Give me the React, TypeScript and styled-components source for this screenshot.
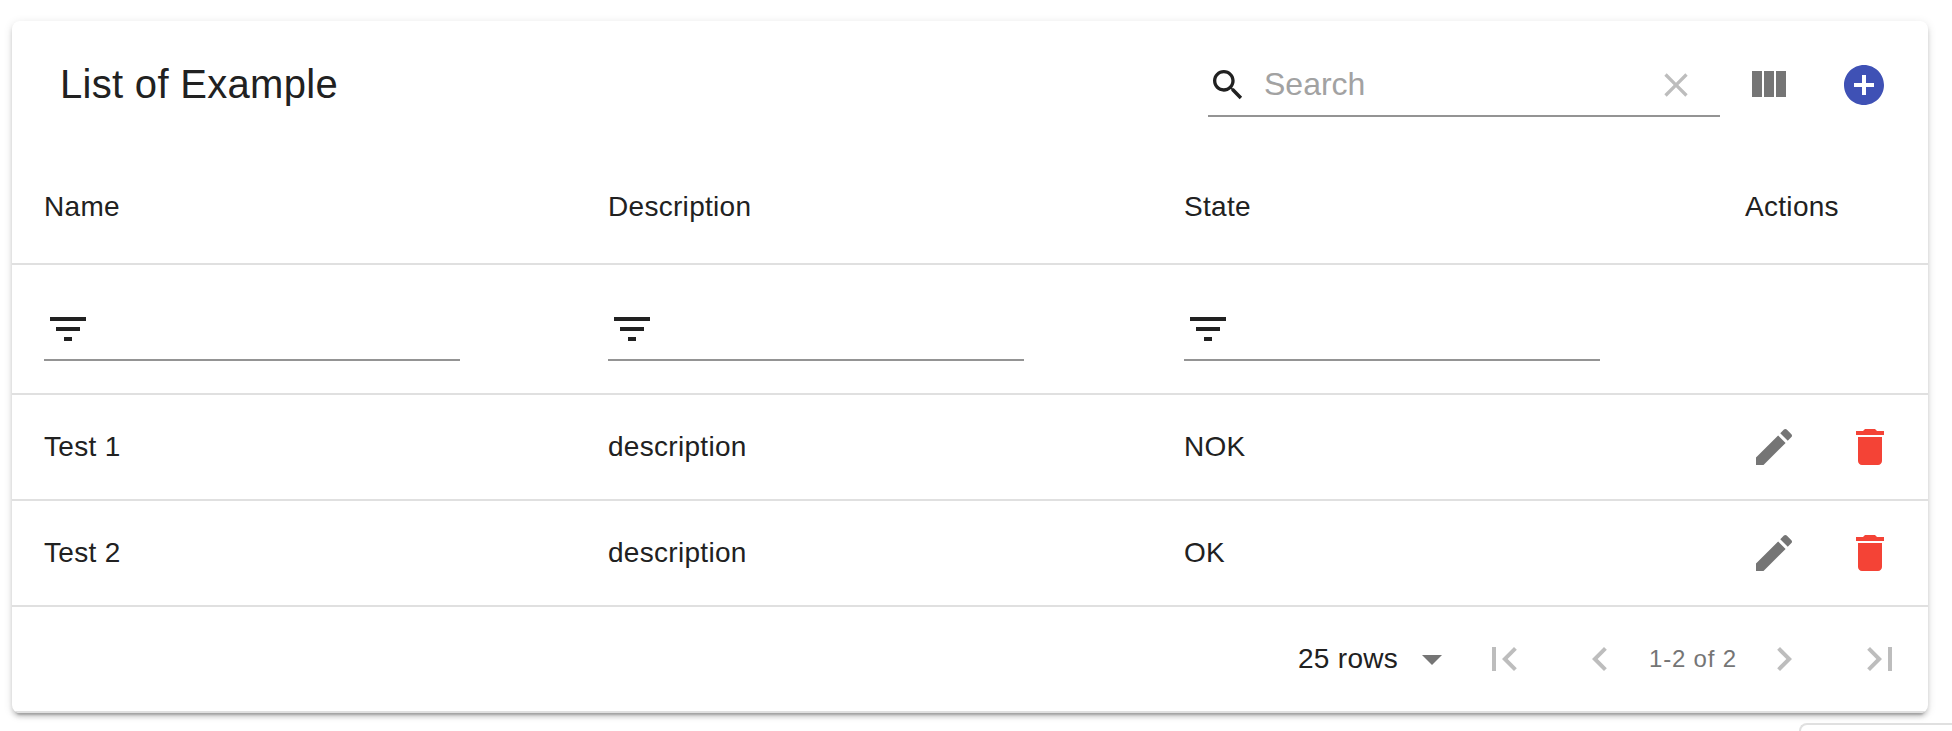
import React from 'react';
import styled, { createGlobalStyle } from 'styled-components';

const GlobalStyle = createGlobalStyle`
  *, *::before, *::after { box-sizing: border-box; }
  body {
    margin: 0;
    background: #fff;
    color: #212121;
    font-family: "Liberation Sans", Arial, Helvetica, sans-serif;
  }
`;

const Page = styled.main`
  display: flex;
  flex-direction: column;
  height: 731px;
  padding: 21px 0 0 12px;
  overflow: hidden;
`;

const Card = styled.section`
  flex: none;
  width: 1916px;
  background: #fff;
  border-radius: 8px;
  box-shadow:
    0 6px 2px -4px rgba(0, 0, 0, 0.2),
    0 4px 4px 0 rgba(0, 0, 0, 0.14),
    0 2px 10px 0 rgba(0, 0, 0, 0.12);
  overflow: hidden;
`;

const Toolbar = styled.header`
  display: flex;
  align-items: center;
  height: 128px;
  padding: 0 16px 0 48px;
`;

const Title = styled.h6`
  flex: 1;
  margin: 0;
  padding-bottom: 2px;
  font-size: 40px;
  font-weight: 400;
  line-height: 64px;
  letter-spacing: 0.3px;
`;

const SearchField = styled.label`
  display: flex;
  align-items: center;
  width: 512px;
  height: 64px;
  padding-top: 2px;
  border-bottom: 2px solid #949494;
`;

const SearchInput = styled.input`
  flex: 1;
  min-width: 0;
  height: 38px;
  margin: 0 0 2px 16px;
  padding: 0;
  border: 0;
  outline: 0;
  background: none;
  color: #212121;
  font: 32px "Liberation Sans", Arial, sans-serif;

  &::placeholder {
    color: #a2a2a2;
    opacity: 1;
  }
`;

const IconButton = styled.button<{ $color?: string }>`
  display: flex;
  flex: none;
  padding: 24px;
  border: 0;
  background: none;
  color: ${({ $color = '#757575' }) => $color};
`;

const Svg = styled.svg<{ $size: number }>`
  display: block;
  flex: none;
  width: ${({ $size }) => $size}px;
  height: ${({ $size }) => $size}px;
  fill: currentColor;
`;

const Row = styled.div<{ $height: number }>`
  display: grid;
  grid-template-columns: 564px 576px 561px 1fr;
  align-items: center;
  height: ${({ $height }) => $height}px;
  border-bottom: 2px solid #e0e0e0;
`;

const HeaderRow = styled(Row)`
  padding-top: 2px;
`;

const Cell = styled.div`
  padding: 0 32px;
  font-size: 28px;
  line-height: 40px;
  letter-spacing: 0.3px;
`;

const FilterField = styled.div`
  display: flex;
  align-items: center;
  width: 416px;
  height: 64px;
  padding-top: 2px;
  border-bottom: 2px solid #949494;
`;

const ActionCell = styled.div`
  display: flex;
  padding-left: 13px;
`;

const Footer = styled.footer`
  display: flex;
  align-items: center;
  justify-content: flex-end;
  height: 106px;
  border-bottom: 2px solid #e0e0e0;
`;

const PageSize = styled.div`
  display: flex;
  align-items: center;
  width: 158px;
  color: #757575;
`;

const PageSizeLabel = styled.span`
  flex: 1;
  color: #212121;
  font-size: 28px;
  line-height: 40px;
  letter-spacing: 0.3px;
`;

const RangeLabel = styled.span`
  width: 88px;
  padding-left: 1px;
  text-align: center;
  color: #757575;
  font-size: 24px;
  line-height: 40px;
  letter-spacing: 0.8px;
  white-space: nowrap;
`;

const NextPanel = styled.div`
  flex: none;
  align-self: flex-end;
  width: 153px;
  height: 40px;
  margin-top: 10px;
  border: 2px solid #e0e0e0;
  border-right: 0;
  border-radius: 8px 0 0 0;
`;

const PATHS = {
  search:
    'M15.5 14h-.79l-.28-.27C15.41 12.59 16 11.11 16 9.5 16 5.91 13.09 3 9.5 3S3 5.91 3 9.5 5.91 16 9.5 16c1.61 0 3.09-.59 4.23-1.57l.27.28v.79l5 4.99L20.49 19l-4.99-5zm-6 0C7.01 14 5 11.99 5 9.5S7.01 5 9.5 5 14 7.01 14 9.5 11.99 14 9.5 14z',
  clear:
    'M19 6.41L17.59 5 12 10.59 6.41 5 5 6.41 10.59 12 5 17.59 6.41 19 12 13.41 17.59 19 19 17.59 13.41 12z',
  columns: 'M10 18h5V5h-5v13zm-6 0h5V5H4v13zM16 5v13h5V5h-5z',
  add: 'M12 2C6.48 2 2 6.48 2 12s4.48 10 10 10 10-4.48 10-10S17.52 2 12 2zm5 11h-4v4h-2v-4H7v-2h4V7h2v4h4v2z',
  filter: 'M10 18h4v-2h-4v2zM3 6v2h18V6H3zm3 7h12v-2H6v2z',
  edit: 'M3 17.25V21h3.75L17.81 9.94l-3.75-3.75L3 17.25zM20.71 7.04c.39-.39.39-1.02 0-1.41l-2.34-2.34c-.39-.39-1.02-.39-1.41 0l-1.83 1.83 3.75 3.75 1.83-1.83z',
  remove: 'M6 19c0 1.1.9 2 2 2h8c1.1 0 2-.9 2-2V7H6v12zM19 4h-3.5l-1-1h-5l-1 1H5v2h14V4z',
  dropDown: 'M7 10l5 5 5-5z',
  first: 'M18.41 16.59L13.82 12l4.59-4.59L17 6l-6 6 6 6zM6 6h2v12H6z',
  previous: 'M15.41 7.41L14 6l-6 6 6 6 1.41-1.41L10.83 12z',
  next: 'M10 6L8.59 7.41 13.17 12l-4.58 4.59L10 18l6-6z',
  last: 'M5.59 7.41L10.18 12l-4.59 4.59L7 18l6-6-6-6zM16 6h2v12h-2z',
};

function Icon({ name, size = 48 }: { name: keyof typeof PATHS; size?: number }) {
  return (
    <Svg $size={size} viewBox="0 0 24 24" aria-hidden="true">
      <path d={PATHS[name]} />
    </Svg>
  );
}

const COLUMNS = ['Name', 'Description', 'State'];
const ROWS = [
  { name: 'Test 1', description: 'description', state: 'NOK' },
  { name: 'Test 2', description: 'description', state: 'OK' },
];
const DISABLED = '#bdbdbd';

export default function App() {
  return (
    <>
      <GlobalStyle />
      <Page>
        <Card>
          <Toolbar>
            <Title>List of Example</Title>
            <SearchField>
              <Icon name="search" size={40} />
              <SearchInput placeholder="Search" />
              <IconButton $color={DISABLED} aria-label="Clear search">
                <Icon name="clear" size={40} />
              </IconButton>
            </SearchField>
            <IconButton aria-label="Show columns">
              <Icon name="columns" />
            </IconButton>
            <IconButton $color="#3f51b5" aria-label="Add">
              <Icon name="add" />
            </IconButton>
          </Toolbar>

          <HeaderRow $height={116}>
            {COLUMNS.map((column) => (
              <Cell key={column}>{column}</Cell>
            ))}
            <Cell>Actions</Cell>
          </HeaderRow>

          <Row $height={130}>
            {COLUMNS.map((column) => (
              <Cell key={column}>
                <FilterField>
                  <Icon name="filter" />
                </FilterField>
              </Cell>
            ))}
          </Row>

          {ROWS.map((row) => (
            <Row key={row.name} $height={106}>
              <Cell>{row.name}</Cell>
              <Cell>{row.description}</Cell>
              <Cell>{row.state}</Cell>
              <ActionCell>
                <IconButton aria-label="Edit">
                  <Icon name="edit" />
                </IconButton>
                <IconButton $color="#f44336" aria-label="Delete">
                  <Icon name="remove" />
                </IconButton>
              </ActionCell>
            </Row>
          ))}

          <Footer>
            <PageSize>
              <PageSizeLabel>25 rows</PageSizeLabel>
              <Icon name="dropDown" />
            </PageSize>
            <IconButton $color={DISABLED} aria-label="First page">
              <Icon name="first" />
            </IconButton>
            <IconButton $color={DISABLED} aria-label="Previous page">
              <Icon name="previous" />
            </IconButton>
            <RangeLabel>1-2 of 2</RangeLabel>
            <IconButton $color={DISABLED} aria-label="Next page">
              <Icon name="next" />
            </IconButton>
            <IconButton $color={DISABLED} aria-label="Last page">
              <Icon name="last" />
            </IconButton>
          </Footer>
        </Card>
        <NextPanel />
      </Page>
    </>
  );
}
